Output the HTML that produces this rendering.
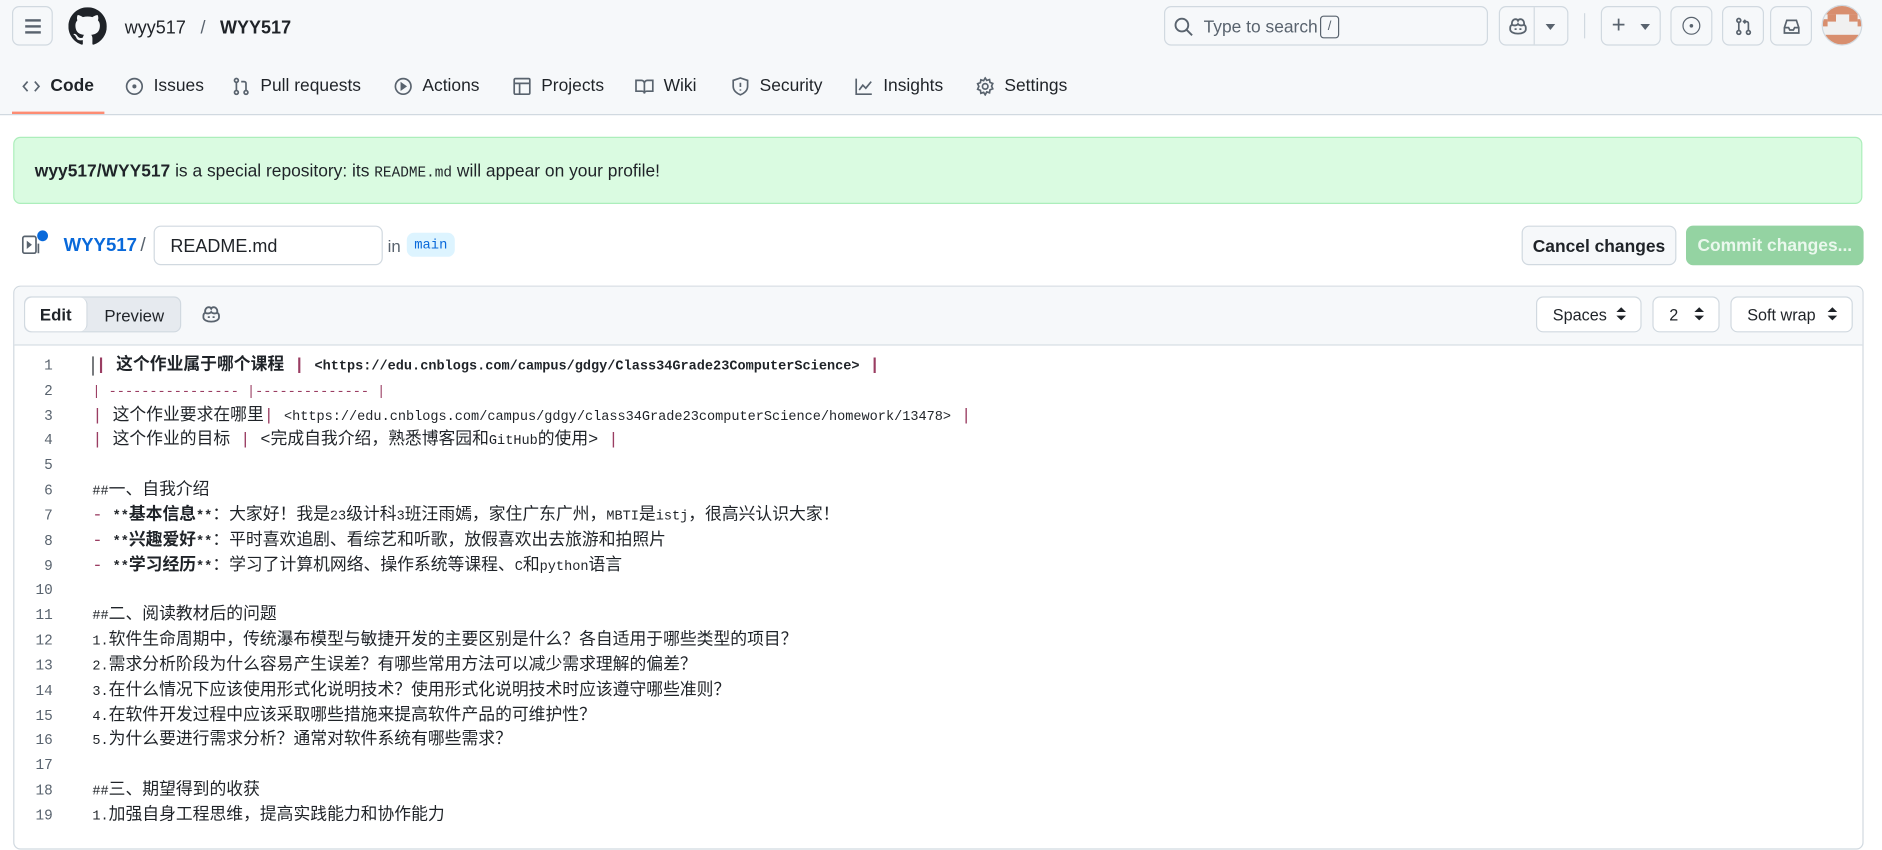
<!DOCTYPE html>
<html><head><meta charset="utf-8"><style>
html,body{margin:0;padding:0;width:1882px;height:829px;overflow:hidden;background:#fff}
#w{position:absolute;left:0;top:0;width:1569px;height:691px;transform:scale(1.2);transform-origin:0 0;font-family:"Liberation Sans","Noto Sans CJK SC",sans-serif;color:#1f2328;font-size:14px}
.a{position:absolute}
.hdr{left:0;top:0;width:1569px;height:95px;background:#f6f8fa;border-bottom:1px solid #d1d9e0}
.btn{position:absolute;border:1px solid #d1d9e0;border-radius:6px;background:#f6f8fa;box-sizing:border-box}
.tab{position:absolute;top:64px;font-size:14.5px;color:#1f2328;display:flex;align-items:center;gap:8px}
.tab svg{width:16px;height:16px;fill:none;stroke:#59636e;stroke-width:1.4}
.sel{position:absolute;top:247px;height:30px;border:1px solid #d1d9e0;border-radius:6px;background:#fff;box-sizing:border-box;font-size:13.5px;line-height:29px;padding-left:13px}
.sel:after{content:"";position:absolute;right:12px;top:8px;border:4px solid transparent;border-bottom:4.5px solid #1f2328;border-top:none}
.sel:before{content:"";position:absolute;right:12px;top:15px;border:4px solid transparent;border-top:4.5px solid #1f2328;border-bottom:none}
.code{position:absolute;left:12px;top:295px;width:1540px;font-family:"Liberation Mono","Noto Sans CJK SC",monospace;font-size:14px;color:#1f2328}
.ln{height:20.83px;line-height:20.83px;white-space:pre;position:relative}
.ln .n{position:absolute;left:0;width:32px;text-align:right;color:#59636e;font-size:12px}
.ln .t{position:absolute;left:65px;top:0;line-height:20.83px}
.ln .t *{line-height:0}
.m{font-size:11.3px}
.p{color:#9a3d62}
b{font-weight:bold}
</style></head><body><div id="w">
<div class="a hdr"></div>
<div class="btn" style="left:10px;top:5px;width:34px;height:33px"><div class="a" style="left:10px;top:10px;width:13px;height:2px;background:#59636e;box-shadow:0 5px #59636e,0 10px #59636e"></div></div>
<svg class="a" style="left:57px;top:6px" width="32" height="32" viewBox="0 0 16 16"><path fill="#1f2328" d="M8 0C3.58 0 0 3.58 0 8c0 3.54 2.290 6.530 5.470 7.590.4.07.55-.17.55-.38 0-.19-.01-.82-.01-1.49-2.010.37-2.530-.49-2.690-.94-.09-.23-.48-.94-.82-1.130-.28-.15-.68-.52-.01-.53.63-.01 1.080.58 1.230.82.72 1.210 1.870.87 2.330.66.07-.52.28-.87.51-1.070-1.780-.2-3.640-.89-3.640-3.950 0-.87.31-1.590.82-2.150-.08-.2-.36-1.020.08-2.120 0 0 .67-.21 2.200.82.64-.18 1.320-.27 2-.27.68 0 1.360.09 2 .27 1.530-1.040 2.200-.82 2.200-.82.44 1.100.16 1.920.08 2.120.51.56.82 1.270.82 2.150 0 3.070-1.870 3.750-3.650 3.950.29.25.54.73.54 1.480 0 1.070-.01 1.930-.01 2.200 0 .21.15.46.55.38A8.013 8.013 0 0016 8c0-4.420-3.580-8-8-8z"/></svg>
<div class="a" style="left:104px;top:15px;font-size:15px">wyy517 <span style="color:#59636e;margin:0 8px">/</span> <b>WYY517</b></div>
<div class="btn" style="left:970px;top:5px;width:270px;height:33px;background:#f6f8fa"></div>
<svg class="a" style="left:978px;top:14px" width="17" height="17" viewBox="0 0 16 16"><circle cx="6.5" cy="6.5" r="5" fill="none" stroke="#59636e" stroke-width="1.5"/><path d="M10 10l4.500 4.500" stroke="#59636e" stroke-width="1.5"/></svg>
<div class="a" style="left:1003px;top:15px;font-size:14.5px;color:#59636e">Type to search</div>
<div class="a" style="left:1100px;top:13px;width:14px;height:17px;border:1px solid #59636e;border-radius:3px;font-size:11px;text-align:center;line-height:17px;color:#59636e">/</div>
<svg style="display:none"><symbol id="cp" viewBox="0 0 16 16"><path fill="none" stroke-width="1.5" d="M3 6.500c-.5-2.500 1-4.500 3-4.500 1 0 1.700.6 2 1.300C8.300 2.600 9 2 10 2c2 0 3.500 2 3 4.500 1 .6 1.500 1.500 1.500 2.500v1.500c0 2-2.800 3.500-6.500 3.500S1.500 12.500 1.500 10.500V9c0-1 .5-1.900 1.500-2.500zM3 6.500C4 7.500 7 7.500 8 6c1 1.500 4 1.500 5 .5"/><path d="M6 9.500v1.500M10 9.500v1.500" stroke-width="1.700"/></symbol></svg>
<div class="btn" style="left:1249px;top:5px;width:58px;height:33px"><div class="a" style="left:28px;top:0;width:1px;height:31px;background:#d1d9e0"></div><svg class="a" style="left:7px;top:8px" width="16" height="16" stroke="#59636e"><use href="#cp"/></svg><div class="a" style="left:38px;top:14px;border:4px solid transparent;border-top:5px solid #59636e"></div></div>
<div class="a" style="left:1320px;top:11px;width:1px;height:21px;background:#d1d9e0"></div>
<div class="btn" style="left:1334px;top:5px;width:50px;height:33px"><div class="a" style="left:8px;top:4px;font-size:20px;color:#59636e">+</div><div class="a" style="left:32px;top:14px;border:4px solid transparent;border-top:5px solid #59636e"></div></div>
<div class="btn" style="left:1392px;top:5px;width:35px;height:33px"><div class="a" style="left:9px;top:8px;width:13px;height:13px;border:1.5px solid #59636e;border-radius:50%"></div><div class="a" style="left:15px;top:14px;width:3px;height:3px;background:#59636e;border-radius:50%"></div></div>
<div class="btn" style="left:1435px;top:5px;width:35px;height:33px"><svg class="a" style="left:9px;top:8px" width="16" height="16" viewBox="0 0 16 16" fill="none" stroke="#59636e" stroke-width="1.4"><circle cx="4" cy="3" r="1.6"/><circle cx="4" cy="13" r="1.6"/><circle cx="12" cy="13" r="1.6"/><path d="M4 4.600v6.800M12 11.400V5.500a1.500 1.500 0 00-1.500-1.500H8M9.500 2.500L8 4l1.500 1.500"/></svg></div>
<div class="btn" style="left:1475px;top:5px;width:35px;height:33px"><svg class="a" style="left:9px;top:8px" width="16" height="16" viewBox="0 0 16 16" fill="none" stroke="#59636e" stroke-width="1.4"><path d="M2 9l2-6h8l2 6v4.500H2zM2 9h3.500l1 2h3l1-2H14"/></svg></div>
<div class="a" style="left:1518px;top:4px;width:34px;height:34px;border-radius:50%;background:#f0f0f0;overflow:hidden;border:1px solid #d1d9e0;box-sizing:border-box"><div class="a" style="left:0;top:0;width:34px;height:7px;background:#d88e6e"></div><div class="a" style="left:4px;top:7px;width:7px;height:6px;background:#d88e6e"></div><div class="a" style="left:22px;top:7px;width:7px;height:6px;background:#d88e6e"></div><div class="a" style="left:0;top:11px;width:4px;height:6px;background:#d88e6e"></div><div class="a" style="left:29px;top:11px;width:5px;height:6px;background:#d88e6e"></div><div class="a" style="left:0;top:24px;width:34px;height:10px;background:#d88e6e"></div></div>

<div class="tab" style="left:18px"><svg viewBox="0 0 16 16"><path d="M5 4L1.500 8 5 12M11 4l3.500 4L11 12"/></svg><b style="font-weight:600">Code</b></div>
<div class="a" style="left:10px;top:93px;width:77px;height:2px;background:#fd8c73"></div>
<div class="tab" style="left:104px"><svg viewBox="0 0 16 16"><circle cx="8" cy="8" r="6.5"/><circle cx="8" cy="8" r="1" fill="#59636e"/></svg>Issues</div>
<div class="tab" style="left:193px"><svg viewBox="0 0 16 16"><circle cx="4" cy="3" r="1.6"/><circle cx="4" cy="13" r="1.6"/><circle cx="12" cy="13" r="1.6"/><path d="M4 4.600v6.800M12 11.400V5.500a1.500 1.500 0 00-1.500-1.500H8"/></svg>Pull requests</div>
<div class="tab" style="left:328px"><svg viewBox="0 0 16 16"><circle cx="8" cy="8" r="6.5"/><path d="M6.500 5.500l3.500 2.500-3.500 2.500z" fill="#59636e"/></svg>Actions</div>
<div class="tab" style="left:427px"><svg viewBox="0 0 16 16"><rect x="1.5" y="1.5" width="13" height="13" rx="1"/><path d="M1.500 5.500h13M6 5.500v9"/></svg>Projects</div>
<div class="tab" style="left:529px"><svg viewBox="0 0 16 16"><path d="M1 3h4.500A2.500 2.500 0 018 5.500V14a2 2 0 00-2-2H1zM15 3h-4.500A2.500 2.500 0 008 5.500V14a2 2 0 012-2h5z"/></svg>Wiki</div>
<div class="tab" style="left:609px"><svg viewBox="0 0 16 16"><path d="M8 1l6 2v5c0 3.500-3 6-6 7-3-1-6-3.500-6-7V3z"/><path d="M8 5v3.500M8 10.500v1"/></svg>Security</div>
<div class="tab" style="left:712px"><svg viewBox="0 0 16 16"><path d="M1.500 1.500v13h13M4 11l3-4 2.500 2.500L14 4"/></svg>Insights</div>
<div class="tab" style="left:813px"><svg viewBox="0 0 16 16"><circle cx="8" cy="8" r="2.3"/><path d="M8 1l1.300 2 2.300-.7.4 2.400 2.300.9-1 2.200 1 2.200-2.300.9-.4 2.400-2.300-.7L8 15l-1.300-2-2.300.7-.4-2.400L1.700 10.400l1-2.400-1-2.200 2.300-.9.4-2.400 2.300.7z"/></svg>Settings</div>

<div class="a" style="left:11px;top:114px;width:1541px;height:56px;background:#dafbe1;border:1px solid #aceebb;border-radius:6px;box-sizing:border-box"></div>
<div class="a" style="left:29px;top:135px;font-size:14.5px"><b style="font-weight:600">wyy517/WYY517</b> is a special repository: its <span style="font-family:'Liberation Mono',monospace;font-size:12px">README.md</span> will appear on your profile!</div>

<svg class="a" style="left:18px;top:195px" width="20" height="18" viewBox="0 0 20 18" fill="none" stroke="#59636e" stroke-width="1.4"><rect x="1" y="2" width="11" height="14" rx="1.5"/><path d="M5 7l2.500 2L5 11z" fill="#59636e"/><path d="M14 8v8"/></svg>
<div class="a" style="left:31px;top:192px;width:9px;height:9px;border-radius:50%;background:#0969da"></div>
<div class="a" style="left:53px;top:196px;font-size:15.5px;color:#0969da;font-weight:600">WYY517</div>
<div class="a" style="left:117px;top:196px;font-size:16px;color:#59636e">/</div>
<div class="a" style="left:128px;top:188px;width:191px;height:33px;border:1px solid #d1d9e0;border-radius:6px;box-sizing:border-box;background:#fff;font-size:15px;padding:8px 0 0 13px">README.md</div>
<div class="a" style="left:323px;top:197px;font-size:14px;color:#59636e">in</div>
<div class="a" style="left:339px;top:194px;width:40px;height:20px;border-radius:6px;background:#ddf4ff;color:#0969da;font-family:'Liberation Mono',monospace;font-size:11.5px;text-align:center;line-height:21px">main</div>
<div class="btn" style="left:1268px;top:188px;width:129px;height:33px;font-size:14.5px;font-weight:600;text-align:center;line-height:34px">Cancel changes</div>
<div class="a" style="left:1405px;top:188px;width:148px;height:33px;border-radius:6px;background:#94d3a2;color:#eaf8ed;font-size:14.5px;font-weight:600;text-align:center;line-height:35px">Commit changes...</div>

<div class="a" style="left:11px;top:238px;width:1542px;height:470px;border:1px solid #d1d9e0;border-radius:6px;box-sizing:border-box"></div>
<div class="a" style="left:12px;top:239px;width:1540px;height:48px;background:#f6f8fa;border-bottom:1px solid #d1d9e0;border-radius:6px 6px 0 0"></div>
<div class="a" style="left:20px;top:247px;width:131px;height:30px;border:1px solid #d1d9e0;border-radius:6px;background:#e6eaef;box-sizing:border-box"></div>
<div class="a" style="left:21px;top:248px;width:51px;height:28px;background:#fff;border-radius:6px;border-right:1px solid #d1d9e0;font-size:14px;font-weight:600;text-align:center;line-height:29px">Edit</div>
<div class="a" style="left:87px;top:255px;font-size:14px">Preview</div>
<svg class="a" style="left:168px;top:254px" width="16" height="16" stroke="#59636e"><use href="#cp"/></svg>
<div class="sel" style="left:1280px;width:88px">Spaces</div>
<div class="sel" style="left:1377px;width:56px">2</div>
<div class="sel" style="left:1442px;width:102px">Soft wrap</div>

<div class="code">
<div class="ln"><span class="n">1</span><span class="t"><span style="border-left:1px solid #1f2328;margin-right:2px"></span><b><span class="p">|</span> 这个作业属于哪个课程 <span class="p">|</span> <span class="m">&lt;https://edu.cnblogs.com/campus/gdgy/Class34Grade23ComputerScience&gt;</span> <span class="p">|</span></b></span></div>
<div class="ln"><span class="n">2</span><span class="t p"><span class="m">| ---------------- |-------------- |</span></span></div>
<div class="ln"><span class="n">3</span><span class="t"><span class="p">|</span> 这个作业要求在哪里<span class="p">|</span> <span class="m">&lt;https://edu.cnblogs.com/campus/gdgy/class34Grade23computerScience/homework/13478&gt;</span> <span class="p">|</span></span></div>
<div class="ln"><span class="n">4</span><span class="t"><span class="p">|</span> 这个作业的目标 <span class="p">|</span> &lt;完成自我介绍，熟悉博客园和<span class="m">GitHub</span>的使用&gt; <span class="p">|</span></span></div>
<div class="ln"><span class="n">5</span><span class="t"></span></div>
<div class="ln"><span class="n">6</span><span class="t"><span class="m">##</span>一、自我介绍</span></div>
<div class="ln"><span class="n">7</span><span class="t"><span class="p">-</span> <b><span class="m">**</span>基本信息<span class="m">**</span></b>：大家好！我是<span class="m">23</span>级计科<span class="m">3</span>班汪雨嫣，家住广东广州，<span class="m">MBTI</span>是<span class="m">istj</span>，很高兴认识大家！</span></div>
<div class="ln"><span class="n">8</span><span class="t"><span class="p">-</span> <b><span class="m">**</span>兴趣爱好<span class="m">**</span></b>：平时喜欢追剧、看综艺和听歌，放假喜欢出去旅游和拍照片</span></div>
<div class="ln"><span class="n">9</span><span class="t"><span class="p">-</span> <b><span class="m">**</span>学习经历<span class="m">**</span></b>：学习了计算机网络、操作系统等课程、<span class="m">C</span>和<span class="m">python</span>语言</span></div>
<div class="ln"><span class="n">10</span><span class="t"></span></div>
<div class="ln"><span class="n">11</span><span class="t"><span class="m">##</span>二、阅读教材后的问题</span></div>
<div class="ln"><span class="n">12</span><span class="t"><span class="m">1.</span>软件生命周期中，传统瀑布模型与敏捷开发的主要区别是什么？各自适用于哪些类型的项目？</span></div>
<div class="ln"><span class="n">13</span><span class="t"><span class="m">2.</span>需求分析阶段为什么容易产生误差？有哪些常用方法可以减少需求理解的偏差？</span></div>
<div class="ln"><span class="n">14</span><span class="t"><span class="m">3.</span>在什么情况下应该使用形式化说明技术？使用形式化说明技术时应该遵守哪些准则？</span></div>
<div class="ln"><span class="n">15</span><span class="t"><span class="m">4.</span>在软件开发过程中应该采取哪些措施来提高软件产品的可维护性？</span></div>
<div class="ln"><span class="n">16</span><span class="t"><span class="m">5.</span>为什么要进行需求分析？通常对软件系统有哪些需求？</span></div>
<div class="ln"><span class="n">17</span><span class="t"></span></div>
<div class="ln"><span class="n">18</span><span class="t"><span class="m">##</span>三、期望得到的收获</span></div>
<div class="ln"><span class="n">19</span><span class="t"><span class="m">1.</span>加强自身工程思维，提高实践能力和协作能力</span></div>
</div>
</div></body></html>
